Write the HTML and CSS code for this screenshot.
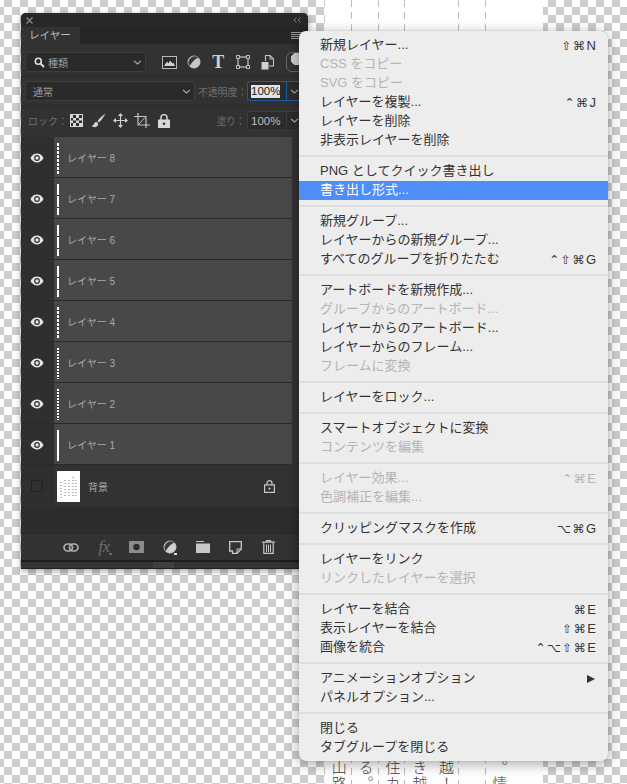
FILE: index.html
```html
<!DOCTYPE html>
<html lang="ja">
<head>
    <title>レイヤー</title>
    <link rel="stylesheet" href="styles.css">
</head>
<body>
    <svg class="defs" width="0" height="0">
        <symbol id="eye" viewBox="0 0 14 10">
            <path d="M0.5 5C2 2 4.3 0.6 7 0.6S12 2 13.5 5C12 8 9.7 9.4 7 9.4S2 8 0.5 5Z" fill="#e6e6e6"/>
            <circle cx="7" cy="5" r="2.9" fill="#2f2f2f"/>
            <circle cx="7" cy="5" r="1.7" fill="#e6e6e6"/>
        </symbol>
        <symbol id="chevron" viewBox="0 0 9 5">
            <path d="M1 0.8L4.5 4L8 0.8" fill="none" stroke="#b0b0b0" stroke-width="1.1"/>
        </symbol>
    </svg>

    <!-- document behind the panels -->
    <div class="doc">
        <div class="doc-col line">山路</div>
        <div class="doc-col line">る。</div>
        <div class="doc-col line">住カ</div>
        <div class="doc-col">き越</div>
        <div class="doc-col line">越！</div>
        <div class="doc-col line"></div>
        <div class="doc-col">。情</div>
    </div>

    <div class="panel">
        <div class="panel-top">
            <svg width="7" height="7" viewBox="0 0 7 7"><path d="M0.5 0.5L6.5 6.5M6.5 0.5L0.5 6.5" stroke="#8a8a8a" stroke-width="1.3"/></svg>
            <svg width="8" height="6" viewBox="0 0 8 6"><path d="M3.5 0.5L1 3L3.5 5.5M7.5 0.5L5 3L7.5 5.5" fill="none" stroke="#7c7c7c"/></svg>
        </div>
        <div class="tabs">
            <div class="tab">レイヤー</div>
            <svg class="tab-menu" width="12" height="8" viewBox="0 0 12 8"><path d="M0 0.5H12M0 2.5H12M0 4.5H12M0 6.5H12" stroke="#9a9a9a"/></svg>
        </div>

        <div class="row filter-row">
            <div class="field filter-field">
                <svg class="search" width="11" height="11" viewBox="0 0 11 11"><circle cx="4.3" cy="4.3" r="3" fill="none" stroke="#e0e0e0" stroke-width="1.6"/><path d="M6.6 6.6L10 10" stroke="#e0e0e0" stroke-width="2"/></svg>
                <span>種類</span>
                <svg class="chev" width="9" height="5"><use href="#chevron"/></svg>
            </div>
            <div class="filter-icons">
                <span class="filter-icon">
                    <svg width="15" height="13" viewBox="0 0 15 13"><rect x="0.5" y="0.5" width="14" height="12" fill="#2a2a2a" stroke="#b8b8b8"/><path d="M2 10L5 5.5L6.5 7.5L8 4.5L10.5 7.5L11.5 6.5L13 10Z" fill="#d0d0d0"/></svg>
                </span>
                <span class="filter-icon">
                    <svg width="14" height="14" viewBox="0 0 14 14"><circle cx="7" cy="7" r="6" fill="#c8c8c8" stroke="#c8c8c8"/><path d="M2.8 11.2A6 6 0 0 1 11.2 2.8C8 4 4.5 7.5 2.8 11.2Z" fill="#3a3a3a"/></svg>
                </span>
                <span class="filter-icon type-icon">T</span>
                <span class="filter-icon">
                    <svg width="14" height="14" viewBox="0 0 14 14"><rect x="2" y="2" width="10" height="10" fill="none" stroke="#c4c4c4" stroke-width="1.2"/><path d="M0.5 0.5h3v3h-3zM10.5 0.5h3v3h-3zM0.5 10.5h3v3h-3zM10.5 10.5h3v3h-3z" fill="#323232" stroke="#c4c4c4"/></svg>
                </span>
                <span class="filter-icon">
                    <svg width="13" height="15" viewBox="0 0 13 15"><path d="M4.5 6V0.5H9L12.5 4V11H8" fill="none" stroke="#c4c4c4" stroke-width="1.1"/><path d="M9 0.5V4H12.5" fill="none" stroke="#c4c4c4"/><rect x="0.5" y="7" width="7" height="7.5" fill="#d0d0d0"/></svg>
                </span>
                <span class="filter-toggle"></span>
            </div>
        </div>

        <div class="row blend-row">
            <div class="field blend-field">
                <span>通常</span>
                <svg class="chev" width="9" height="5"><use href="#chevron"/></svg>
            </div>
            <span class="label opacity-label">不透明度：</span>
            <div class="amount active"><span class="selected">100%</span></div>
            <div class="amount-drop active"><svg width="9" height="5"><use href="#chevron"/></svg></div>
        </div>

        <div class="row lock-row">
            <span class="label lock-label">ロック：</span>
            <span class="lock-icon">
                <svg width="13" height="13" viewBox="0 0 13 13"><rect width="13" height="13" fill="#d8d8d8"/><path d="M3 1h3v3H3zM9 1h3v3H9zM1 4h2v2.5H1zM6 4h3v2.5H6zM3 6.5h3V9H3zM9 6.5h3V9H9zM1 9h2v3H1zM6 9h3v3H6z" fill="#2d2d2d"/></svg>
            </span>
            <span class="lock-icon">
                <svg width="15" height="15" viewBox="0 0 15 15"><path d="M14.5 0.5C12 2 8.5 5 6.5 8L8 9.5C10.5 7 13 3.5 14.5 0.5Z" fill="#d0d0d0"/><path d="M5.5 8.8C3 9 3.5 12 0.5 13C3 15 7 14.5 7.3 10.5Z" fill="#d0d0d0"/></svg>
            </span>
            <span class="lock-icon">
                <svg width="15" height="15" viewBox="0 0 15 15"><path d="M7.5 1V14M1 7.5H14" stroke="#d0d0d0" stroke-width="1.2"/><path d="M7.5 0L10 3H5ZM7.5 15L10 12H5ZM0 7.5L3 5V10ZM15 7.5L12 5V10Z" fill="#d0d0d0"/></svg>
            </span>
            <span class="lock-icon">
                <svg width="16" height="15" viewBox="0 0 16 15"><path d="M4 0V12H16M0 3.5H12V15" fill="none" stroke="#c4c4c4" stroke-width="1.2"/><path d="M5 11L11 4.5" stroke="#c4c4c4"/></svg>
            </span>
            <span class="lock-icon">
                <svg width="12" height="14" viewBox="0 0 12 14"><path d="M3 6V3.6A3 3 0 0 1 9 3.6V6" fill="none" stroke="#d8d8d8" stroke-width="1.5"/><rect y="5.5" width="12" height="8.5" rx="0.5" fill="#d8d8d8"/><circle cx="6" cy="9.7" r="1.3" fill="#323232"/></svg>
            </span>
            <span class="label fill-label">塗り：</span>
            <div class="amount">100%</div>
            <div class="amount-drop"><svg width="9" height="5"><use href="#chevron"/></svg></div>
        </div>

        <div class="layers">
            <div class="layer">
                <div class="layer-eye"><svg width="14" height="10"><use href="#eye"/></svg></div>
                <div class="layer-body"><span class="thumb dash-long"></span><span class="layer-name">レイヤー 8</span></div>
            </div>
            <div class="layer">
                <div class="layer-eye"><svg width="14" height="10"><use href="#eye"/></svg></div>
                <div class="layer-body"><span class="thumb dash-rare"></span><span class="layer-name">レイヤー 7</span></div>
            </div>
            <div class="layer">
                <div class="layer-eye"><svg width="14" height="10"><use href="#eye"/></svg></div>
                <div class="layer-body"><span class="thumb dash-rare"></span><span class="layer-name">レイヤー 6</span></div>
            </div>
            <div class="layer">
                <div class="layer-eye"><svg width="14" height="10"><use href="#eye"/></svg></div>
                <div class="layer-body"><span class="thumb dash-rare"></span><span class="layer-name">レイヤー 5</span></div>
            </div>
            <div class="layer">
                <div class="layer-eye"><svg width="14" height="10"><use href="#eye"/></svg></div>
                <div class="layer-body"><span class="thumb dash-long"></span><span class="layer-name">レイヤー 4</span></div>
            </div>
            <div class="layer">
                <div class="layer-eye"><svg width="14" height="10"><use href="#eye"/></svg></div>
                <div class="layer-body"><span class="thumb dash-short"></span><span class="layer-name">レイヤー 3</span></div>
            </div>
            <div class="layer">
                <div class="layer-eye"><svg width="14" height="10"><use href="#eye"/></svg></div>
                <div class="layer-body"><span class="thumb dash-short"></span><span class="layer-name">レイヤー 2</span></div>
            </div>
            <div class="layer">
                <div class="layer-eye"><svg width="14" height="10"><use href="#eye"/></svg></div>
                <div class="layer-body"><span class="thumb"></span><span class="layer-name">レイヤー 1</span></div>
            </div>
            <div class="layer layer-bg">
                <div class="layer-eye"><span class="eye-off"></span></div>
                <div class="layer-body">
                    <svg class="bg-thumb" width="23" height="31" viewBox="0 0 23 31">
                        <rect width="23" height="31" fill="#fff"/>
                        <path d="M4 11V27M8 9V27M12 9V27M16 6V27M19 9V27" stroke="#777" stroke-width="1" stroke-dasharray="1 2"/>
                    </svg>
                    <span class="layer-name bg-name">背景</span>
                    <svg class="bg-lock" width="11" height="13" viewBox="0 0 11 13"><path d="M3 5V3.2A2.5 2.5 0 0 1 8 3.2V5" fill="none" stroke="#c8c8c8" stroke-width="1.2"/><rect x="0.6" y="4.9" width="9.8" height="7.5" fill="none" stroke="#c8c8c8" stroke-width="1.2"/><circle cx="5.5" cy="8.6" r="1.1" fill="#c8c8c8"/></svg>
                </div>
            </div>
        </div>
        <div class="layers-empty"></div>

        <div class="panel-foot">
            <span class="foot-icon">
                <svg width="16" height="9" viewBox="0 0 16 9"><rect x="1" y="1" width="8.5" height="7" rx="3.5" fill="none" stroke="#b0b0b0" stroke-width="1.7"/><rect x="6.5" y="1" width="8.5" height="7" rx="3.5" fill="none" stroke="#b0b0b0" stroke-width="1.7"/></svg>
            </span>
            <span class="foot-icon fx">fx<i class="foot-dot dim"></i></span>
            <span class="foot-icon">
                <svg width="15" height="12" viewBox="0 0 15 12"><rect width="15" height="12" fill="#8c8c8c"/><circle cx="7.5" cy="6" r="3.2" fill="#2e2e2e"/></svg>
            </span>
            <span class="foot-icon">
                <svg width="14" height="14" viewBox="0 0 14 14"><circle cx="7" cy="7" r="6" fill="#d0d0d0" stroke="#d0d0d0"/><path d="M2.8 11.2A6 6 0 0 1 11.2 2.8C8 4 4.5 7.5 2.8 11.2Z" fill="#3a3a3a"/></svg>
                <i class="foot-dot"></i>
            </span>
            <span class="foot-icon">
                <svg width="14" height="12" viewBox="0 0 14 12"><path d="M0 0H8V1H0Z" fill="#c8c8c8"/><path d="M0 2.5H14V12H0Z" fill="#c8c8c8"/></svg>
            </span>
            <span class="foot-icon">
                <svg width="13" height="13" viewBox="0 0 13 13"><path d="M0.7 0.7H12.3V8L8 12.3H3.5V10H0.7Z" fill="none" stroke="#c8c8c8" stroke-width="1.3"/><path d="M8 12V8H12" fill="none" stroke="#c8c8c8"/></svg>
            </span>
            <span class="foot-icon">
                <svg width="13" height="14" viewBox="0 0 13 14"><path d="M0 2.2H13M4.5 2V0.6H8.5V2" fill="none" stroke="#c8c8c8" stroke-width="1.2"/><path d="M1.8 3V13.4H11.2V3" fill="none" stroke="#c8c8c8" stroke-width="1.2"/><path d="M4.5 4.5V12M6.5 4.5V12M8.5 4.5V12" stroke="#c8c8c8"/></svg>
            </span>
        </div>
        <div class="panel-line"></div>
        <div class="panel-grip"></div>
    </div>

    <!-- flyout menu of the panel -->
    <div class="menu">
        <div class="menu-item"><span>新規レイヤー...</span><span class="keys"><span class="sym">⇧⌘</span>N</span></div>
        <div class="menu-item off"><span>CSS をコピー</span></div>
        <div class="menu-item off"><span>SVG をコピー</span></div>
        <div class="menu-item"><span>レイヤーを複製...</span><span class="keys"><span class="sym">⌃⌘</span>J</span></div>
        <div class="menu-item"><span>レイヤーを削除</span></div>
        <div class="menu-item"><span>非表示レイヤーを削除</span></div>
        <div class="menu-sep"></div>
        <div class="menu-item"><span>PNG としてクイック書き出し</span></div>
        <div class="menu-item current"><span>書き出し形式...</span></div>
        <div class="menu-sep"></div>
        <div class="menu-item"><span>新規グループ...</span></div>
        <div class="menu-item"><span>レイヤーからの新規グループ...</span></div>
        <div class="menu-item"><span>すべてのグループを折りたたむ</span><span class="keys"><span class="sym">⌃⇧⌘</span>G</span></div>
        <div class="menu-sep"></div>
        <div class="menu-item"><span>アートボードを新規作成...</span></div>
        <div class="menu-item off"><span>グループからのアートボード...</span></div>
        <div class="menu-item"><span>レイヤーからのアートボード...</span></div>
        <div class="menu-item"><span>レイヤーからのフレーム...</span></div>
        <div class="menu-item off"><span>フレームに変換</span></div>
        <div class="menu-sep"></div>
        <div class="menu-item"><span>レイヤーをロック...</span></div>
        <div class="menu-sep"></div>
        <div class="menu-item"><span>スマートオブジェクトに変換</span></div>
        <div class="menu-item off"><span>コンテンツを編集</span></div>
        <div class="menu-sep"></div>
        <div class="menu-item off"><span>レイヤー効果...</span><span class="keys"><span class="sym">⌃⌘</span>E</span></div>
        <div class="menu-item off"><span>色調補正を編集...</span></div>
        <div class="menu-sep"></div>
        <div class="menu-item"><span>クリッピングマスクを作成</span><span class="keys"><span class="sym">⌥⌘</span>G</span></div>
        <div class="menu-sep"></div>
        <div class="menu-item"><span>レイヤーをリンク</span></div>
        <div class="menu-item off"><span>リンクしたレイヤーを選択</span></div>
        <div class="menu-sep"></div>
        <div class="menu-item"><span>レイヤーを結合</span><span class="keys"><span class="sym">⌘</span>E</span></div>
        <div class="menu-item"><span>表示レイヤーを結合</span><span class="keys"><span class="sym">⇧⌘</span>E</span></div>
        <div class="menu-item"><span>画像を統合</span><span class="keys"><span class="sym">⌃⌥⇧⌘</span>E</span></div>
        <div class="menu-sep"></div>
        <div class="menu-item"><span>アニメーションオプション</span><span class="submenu-arrow"></span></div>
        <div class="menu-item"><span>パネルオプション...</span></div>
        <div class="menu-sep"></div>
        <div class="menu-item"><span>閉じる</span></div>
        <div class="menu-item"><span>タブグループを閉じる</span></div>
    </div>
</body>
</html>
```

FILE: styles.css
```css
html, body {
    margin: 0;
    height: 100%;
}
body {
    position: relative;
    overflow: hidden;
    font-family: "Liberation Sans", "Noto Sans CJK JP", sans-serif;
    background: repeating-conic-gradient(#cdcdcd 0 25%, #fff 0 50%) 4px 7px / 16px 16px;
}
.defs {
    position: absolute;
}

/* document */
.doc {
    position: absolute;
    left: 325px;
    top: 0;
    width: 218px;
    height: 784px;
    overflow: hidden;
    background: #fff;
    display: flex;
}
.doc-col {
    width: 26.8px;
    box-sizing: border-box;
    padding-top: 760px;
    writing-mode: vertical-rl;
    white-space: nowrap;
    font-family: "Noto Sans CJK JP", serif;
    font-size: 15px;
    letter-spacing: 1px;
    line-height: 26.8px;
    color: #444;
    font-weight: 300;
}
.doc-col.line {
    background: repeating-linear-gradient(#bbb 0 7px, transparent 7px 12px) right top / 1px 100% no-repeat;
}

/* layers panel */
.panel {
    position: absolute;
    left: 21px;
    top: 13px;
    width: 287px;
    height: 556px;
    display: flex;
    flex-direction: column;
    background: #323232;
    border-radius: 5px 5px 0 0;
    box-shadow: 0 2px 6px rgba(0, 0, 0, 0.35);
    overflow: hidden;
    color: #a8a8a8;
    font-size: 10px;
}
.panel-top {
    height: 14px;
    flex: none;
    display: flex;
    align-items: center;
    justify-content: space-between;
    padding: 0 7px 0 5px;
    background: #282828;
}
.tabs {
    height: 17px;
    flex: none;
    display: flex;
    background: #262626;
    position: relative;
}
.tab {
    width: 59px;
    box-sizing: border-box;
    padding-left: 8px;
    line-height: 17px;
    font-size: 10.5px;
    color: #bdbdbd;
    background: #323232;
}
.tab-menu {
    position: absolute;
    left: 270px;
    top: 5px;
}
.row {
    flex: none;
    display: flex;
    align-items: center;
    box-sizing: border-box;
    padding-left: 4px;
    border-bottom: 1px solid #2a2a2a;
}
.filter-row {
    height: 33px;
    padding-top: 4px;
}
.blend-row {
    height: 29px;
}
.lock-row {
    height: 31px;
    padding-bottom: 2px;
    border-bottom: 0;
}
.field {
    height: 20px;
    box-sizing: border-box;
    display: flex;
    align-items: center;
    background: #2a2a2a;
    border: 1px solid #3d3d3d;
    border-radius: 3px;
    color: #9c9c9c;
    font-size: 10px;
}
.chev {
    margin-left: auto;
    margin-right: 3px;
}
.filter-field {
    width: 127px;
    padding-left: 8px;
}
.search {
    margin-right: 3px;
}
.filter-icons {
    display: flex;
    align-items: center;
    margin-left: 11.5px;
}
.filter-icon {
    width: 24.5px;
    height: 16px;
    display: flex;
    align-items: center;
    justify-content: center;
}
.type-icon {
    font-family: "Liberation Serif", serif;
    font-weight: bold;
    font-size: 18px;
    color: #cfcfcf;
}
.filter-toggle {
    width: 22px;
    height: 20px;
    margin-left: 6.5px;
    box-sizing: border-box;
    border: 1px solid #666;
    border-radius: 6px;
    background: radial-gradient(circle at 10px 6px, #d0d0d0 6px, transparent 6.5px);
}
.blend-field {
    width: 170px;
    padding-left: 7px;
}
.label {
    color: #707070;
    font-size: 10px;
    white-space: nowrap;
}
.opacity-label {
    width: 47px;
    margin: 0 2px 0 3px;
    letter-spacing: -0.2px;
}
.amount, .amount-drop {
    height: 20px;
    box-sizing: border-box;
    display: flex;
    align-items: center;
    border: 1px solid #3d3d3d;
    background: #2c2c2c;
    color: #bdbdbd;
    font-size: 11.5px;
}
.amount {
    width: 40px;
    padding-left: 3px;
    border-radius: 3px 0 0 3px;
}
.amount-drop {
    width: 17px;
    border-left: 0;
    padding-left: 3px;
    border-radius: 0 3px 3px 0;
}
.amount.active, .amount-drop.active {
    border-color: #1f5c9e;
}
.selected {
    background: #e4e4e4;
    color: #222;
    line-height: 13px;
}
.lock-label {
    margin-left: 3px;
    width: 37px;
}
.lock-icon {
    width: 22px;
    height: 16px;
    display: flex;
    align-items: center;
    justify-content: center;
}
.fill-label {
    margin-left: auto;
    margin-right: 2px;
    letter-spacing: -0.5px;
}
.lock-row .amount-drop {
    margin-right: 4px;
}

.layers {
    flex: none;
    margin-right: 16px;
    background: #2f2f2f;
}
.layer {
    height: 41px;
    display: flex;
    box-sizing: border-box;
    border-bottom: 1px solid #2a2a2a;
}
.layer-eye {
    width: 32px;
    flex: none;
    display: flex;
    align-items: center;
    justify-content: center;
    padding-top: 2px;
    box-sizing: border-box;
    background: #2f2f2f;
}
.layer-body {
    flex: 1;
    display: flex;
    align-items: center;
    padding-left: 3px;
    background: #484848;
    border-left: 1px solid #2a2a2a;
}
.thumb {
    width: 2px;
    height: 31px;
    margin-top: 2px;
    background: #fff;
}
.thumb.dash-long {
    background: repeating-linear-gradient(#fff 0 3px, #333 3px 4px);
}
.thumb.dash-short {
    background: repeating-linear-gradient(#fff 0 2px, #333 2px 3px);
}
.thumb.dash-rare {
    background: repeating-linear-gradient(#fff 0 11px, #333 11px 12px);
}
.layer-name {
    margin-left: 8px;
    font-size: 10px;
    color: #a8a8a8;
}
.layer-bg {
    height: 42px;
    border-bottom: 0;
}
.layer-bg .layer-eye {
    padding-top: 0;
}
.layer-bg .layer-body {
    background: #323232;
    border-left-color: #2e2e2e;
}
.eye-off {
    width: 12px;
    height: 12px;
    border: 1px solid #222;
    box-sizing: border-box;
}
.bg-name {
    margin-left: 8px;
}
.bg-lock {
    margin-left: auto;
    margin-right: 17px;
}
.layers-empty {
    flex: 1;
    background: #2c2c2c;
}
.panel-foot {
    height: 27px;
    flex: none;
    box-sizing: border-box;
    padding-left: 34px;
    display: flex;
    align-items: center;
    background: #323232;
    border-top: 1px solid #2a2a2a;
}
.foot-icon {
    width: 32.8px;
    height: 16px;
    flex: none;
    position: relative;
    display: flex;
    align-items: center;
    justify-content: center;
}
.fx {
    font-family: "Liberation Serif", serif;
    font-style: italic;
    font-size: 16px;
    color: #707070;
}
.foot-dot {
    position: absolute;
    left: 21px;
    top: 14px;
    width: 3px;
    height: 2px;
    background: #ddd;
}
.foot-dot.dim {
    background: #6a6a6a;
}
.panel-line {
    height: 2px;
    flex: none;
    background: #1c1c1c;
}
.panel-grip {
    height: 7px;
    flex: none;
    background: #333 linear-gradient(90deg, transparent 0 132px, #3f3f3f 132px 153px, transparent 153px);
    border-bottom: 1px solid #222;
    box-sizing: border-box;
}

/* menu */
.menu {
    position: absolute;
    left: 299px;
    top: 31px;
    width: 309px;
    height: 730px;
    box-sizing: border-box;
    padding-top: 5px;
    background: #eeeded;
    border-radius: 7px;
    box-shadow: 0 3px 14px rgba(0, 0, 0, 0.35), 0 0 1px rgba(0, 0, 0, 0.3);
    color: #333;
    font-size: 13px;
}
.menu-item {
    height: 19px;
    box-sizing: border-box;
    display: flex;
    align-items: center;
    justify-content: space-between;
    padding: 0 11px 5px 21px;
    white-space: nowrap;
}
.menu-item.off {
    color: #b4b4b4;
}
.menu-item.current {
    background: #4f8ef7;
    color: #fff;
}
.keys {
    font-size: 13px;
    letter-spacing: 1px;
    padding-top: 4px;
}
.sym {
    font-family: "DejaVu Sans", sans-serif;
    font-size: 12px;
    letter-spacing: 1.5px;
}
.submenu-arrow {
    width: 0;
    height: 0;
    margin: 5px 2px 0 0;
    border-left: 8px solid #333;
    border-top: 4.5px solid transparent;
    border-bottom: 4.5px solid transparent;
}
.menu-sep {
    height: 2px;
    margin: 5px 0;
    background: #dedede;
}
```
